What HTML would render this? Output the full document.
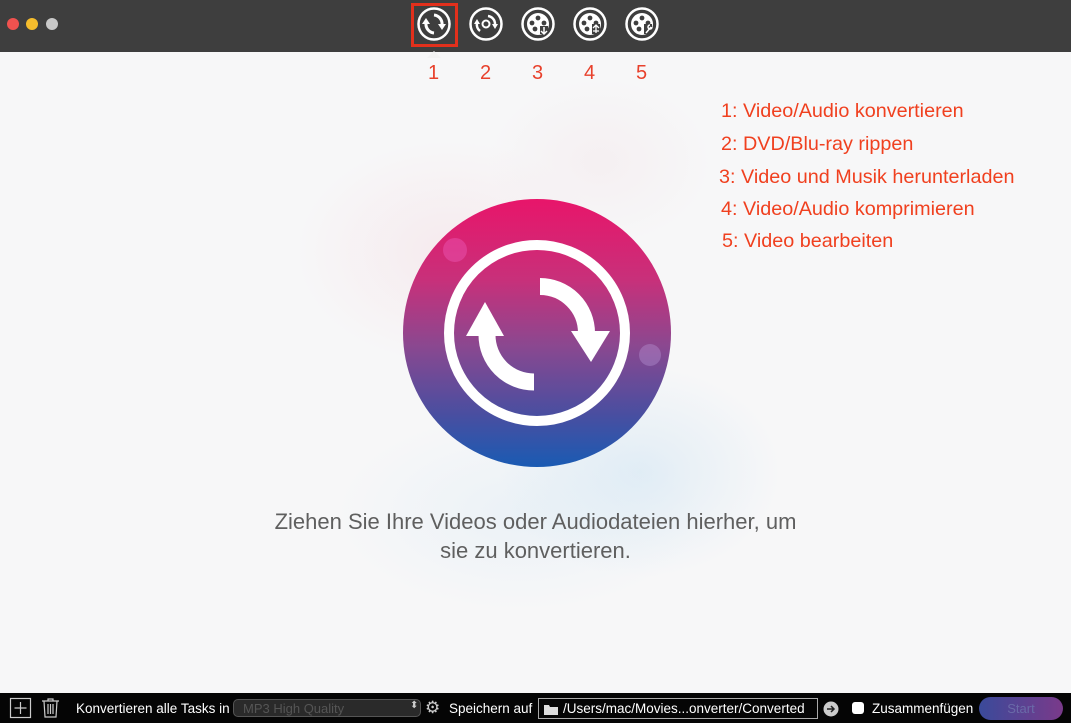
<!DOCTYPE html>
<html><head><meta charset="utf-8"><style>
*{margin:0;padding:0;box-sizing:border-box}
body{width:1071px;height:723px;overflow:hidden;font-family:"Liberation Sans",sans-serif;background:#f6f6f7;position:relative}
.top{position:absolute;left:0;top:0;width:1071px;height:52px;background:#3e3e3e}
.dot{position:absolute;top:18px;width:12px;height:12px;border-radius:50%}
.bg{position:absolute;left:0;top:52px;width:1071px;height:641px;background:
radial-gradient(ellipse 220px 160px at 450px 200px,rgba(245,215,222,.4),transparent 70%),
radial-gradient(ellipse 200px 150px at 640px 420px,rgba(200,225,242,.45),transparent 70%),
radial-gradient(ellipse 260px 140px at 520px 460px,rgba(220,235,245,.45),transparent 70%),
radial-gradient(ellipse 160px 120px at 600px 110px,rgba(242,228,232,.4),transparent 70%),#f7f7f8}
.num{position:absolute;top:62px;color:#e8412c;font-size:20px}
.list{position:absolute;left:721px;color:#f0401f;font-size:19.8px;white-space:nowrap}
.msg{position:absolute;left:0;width:1071px;text-align:center;color:#5f5f5f;font-size:22px}
.bot{position:absolute;left:0;top:693px;width:1071px;height:30px;background:#050505;color:#fff;font-size:13.5px}
.bot span{position:absolute;top:8px;white-space:nowrap}
</style></head><body>
<div class="top">
<div class="dot" style="left:7px;background:#f0524f"></div>
<div class="dot" style="left:26px;background:#f5bd2d"></div>
<div class="dot" style="left:46px;background:#c8c8c8"></div>
<svg width="1071" height="52" style="position:absolute;left:0;top:0" fill="none" stroke="#fff" stroke-width="2.5">
<rect x="412.5" y="4.5" width="44" height="41" stroke="#e2301c" stroke-width="3"/>
<circle cx="434" cy="24" r="15.5"/>
<path d="M434 15a9 9 0 0 1 8 10" stroke-width="3"/><path d="M438 24l4 6 4-6z" fill="#fff" stroke="none"/>
<path d="M434 33a9 9 0 0 1 -8 -10" stroke-width="3"/><path d="M422 24l4 -6 4 6z" fill="#fff" stroke="none"/>
<circle cx="486" cy="24" r="15.5"/>
<circle cx="486" cy="24" r="3.5" stroke-width="2"/>
<path d="M480 31a8 8 0 0 1 -3 -8M488 16a8 8 0 0 1 7 8" stroke-width="2.5"/>
<path d="M474 24l3-5 3 5zM492 24l3 5 3-5z" fill="#fff" stroke="none"/>
<circle cx="538" cy="24" r="15.5"/><circle cx="538" cy="24" r="11" fill="#fff" stroke="none"/>
<circle cx="590" cy="24" r="15.5"/><circle cx="590" cy="24" r="11" fill="#fff" stroke="none"/>
<circle cx="642" cy="24" r="15.5"/><circle cx="642" cy="24" r="11" fill="#fff" stroke="none"/>
<g fill="#3e3e3e" stroke="none">
<circle cx="538" cy="18" r="2.4"/><circle cx="532" cy="23" r="2.4"/><circle cx="544" cy="23" r="2.4"/><circle cx="535" cy="29" r="2.4"/>
<circle cx="590" cy="18" r="2.4"/><circle cx="584" cy="23" r="2.4"/><circle cx="596" cy="23" r="2.4"/><circle cx="587" cy="29" r="2.4"/>
<circle cx="642" cy="18" r="2.4"/><circle cx="636" cy="23" r="2.4"/><circle cx="648" cy="23" r="2.4"/><circle cx="639" cy="29" r="2.4"/>
<rect x="540" y="26" width="8" height="8"/><rect x="592" y="24" width="8" height="10"/><rect x="644" y="24" width="8" height="10"/>
</g>
<path d="M544 27v6m-3-2l3 3 3-3" stroke-width="1.5"/>
<path d="M596 25v8m-3-5l3-3 3 3m-6 3h6" stroke-width="1.3"/>
<path d="M646 33l5-6m-1-2a2 2 0 1 0 2 2" stroke-width="1.5"/>
</svg>
</div>
<div class="bg"></div>
<svg width="14" height="8" style="position:absolute;left:427px;top:50px"><path d="M0 8L7 1 14 8z" fill="#f2f2f2"/></svg>
<div class="num" style="left:428px">1</div><div class="num" style="left:480px">2</div><div class="num" style="left:532px">3</div><div class="num" style="left:584px">4</div><div class="num" style="left:636px">5</div>
<div class="list" style="top:100px">1: Video/Audio konvertieren</div>
<div class="list" style="top:133px">2: DVD/Blu-ray rippen</div>
<div class="list" style="top:166px;left:719px">3: Video und Musik herunterladen</div>
<div class="list" style="top:198px">4: Video/Audio komprimieren</div>
<div class="list" style="top:230px;left:722px">5: Video bearbeiten</div>
<svg width="300" height="300" style="position:absolute;left:387px;top:183px" viewBox="387 183 300 300">
<defs><linearGradient id="g" x1="0" y1="0" x2="0" y2="1">
<stop offset="0" stop-color="#e8156a"/><stop offset=".3" stop-color="#c8307a"/><stop offset=".55" stop-color="#8a4890"/><stop offset=".8" stop-color="#4a4ea0"/><stop offset="1" stop-color="#1a5bb3"/></linearGradient></defs>
<circle cx="537" cy="333" r="134" fill="url(#g)"/>
<circle cx="455" cy="250" r="12" fill="#f060c0" opacity=".4"/>
<circle cx="650" cy="355" r="11" fill="#c0a0e0" opacity=".35"/>
<circle cx="537" cy="333" r="88" fill="none" stroke="#fff" stroke-width="10"/>
<path d="M540 286.5A46.5 46.5 0 0 1 586.5 333" fill="none" stroke="#fff" stroke-width="17"/>
<path d="M571 331L610 331 591 362z" fill="#fff"/>
<path d="M534 382A47 47 0 0 1 487 335" fill="none" stroke="#fff" stroke-width="17"/>
<path d="M466 336L504 336 485 302z" fill="#fff"/>
</svg>
<div class="msg" style="top:509px">Ziehen Sie Ihre Videos oder Audiodateien hierher, um</div>
<div class="msg" style="top:538px">sie zu konvertieren.</div>
<div class="bot">
<svg width="70" height="30" style="position:absolute;left:0;top:0" fill="none" stroke="#ccc" stroke-width="1.2">
<rect x="10.5" y="5.5" width="20" height="19"/><path d="M20.5 9v12M14.5 15h12"/>
<path d="M42 8h17M48 8V6h5v2M44 8l1 16h11l1-16M48 11v10M50.5 11v10M53 11v10"/>
</svg>
<span style="left:76px">Konvertieren alle Tasks in</span>
<div style="position:absolute;left:233px;top:6px;width:188px;height:18px;border-radius:5px;background:#2a2a2a;border:1px solid #555;color:#555;font-size:13px;padding:1px 0 0 9px">MP3 High Quality<span style="position:absolute;left:176px;top:0;color:#ccc;font-size:10px">⬍</span></div>
<span style="left:425px;top:5px;font-size:17px;color:#ccc">⚙</span>
<span style="left:449px">Speichern auf</span>
<div style="position:absolute;left:538px;top:5px;width:280px;height:21px;border:1px solid #aaa"></div>
<svg width="14" height="12" style="position:absolute;left:544px;top:10px"><path d="M0 2h5l1 2h8v8H0z" fill="#ddd"/></svg>
<span style="left:563px;font-size:13.5px">/Users/mac/Movies...onverter/Converted</span>
<svg width="16" height="16" style="position:absolute;left:823px;top:8px"><circle cx="8" cy="8" r="7.5" fill="#ccc"/><path d="M4 8h7M8 5l3 3-3 3" stroke="#222" stroke-width="1.5" fill="none"/></svg>
<div style="position:absolute;left:852px;top:9px;width:12px;height:12px;border-radius:3px;background:#fff"></div>
<span style="left:872px">Zusammenfügen</span>
<div style="position:absolute;left:979px;top:4px;width:84px;height:23px;border-radius:12px;background:linear-gradient(90deg,#3a4a9a,#7a3a8a);color:#6a6aa8;font-size:13px;text-align:center;line-height:23px">Start</div>
</div>
</body></html>
